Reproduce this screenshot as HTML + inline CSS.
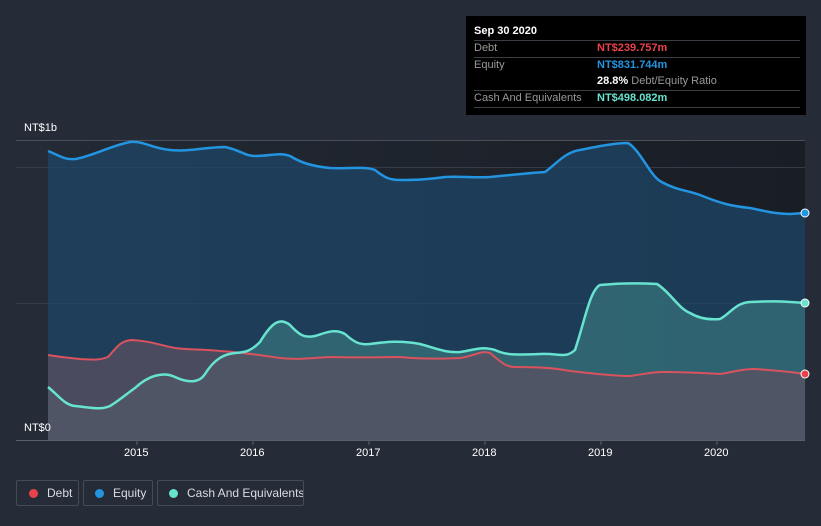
<!DOCTYPE html>
<html><head><style>
html,body{margin:0;width:821px;height:526px;overflow:hidden}
body{background:#262c37;font-family:"Liberation Sans",sans-serif;position:relative}
.t{position:absolute;color:#fff;font-size:11px}
.tip{position:absolute;left:466px;top:16px;width:340px;height:99px;background:#000}
.tip div{position:absolute;font-size:11px;white-space:nowrap}
.ln{position:absolute;left:8px;width:326px;height:1px;background:#3b3f45}
.leg{position:absolute;top:480px;height:26px;border:1px solid #464c56;border-radius:2px;color:#d8dce2;font-size:12px;line-height:24px;box-sizing:border-box;white-space:nowrap;overflow:hidden}
.leg i{display:inline-block;width:9px;height:9px;border-radius:50%;margin:0 9px 0 11px;vertical-align:-1px}
</style></head><body>
<svg width="821" height="526" style="position:absolute;left:0;top:0">
<defs><linearGradient id="bg" x1="0" x2="1"><stop offset="0" stop-color="#232a35"/><stop offset="1" stop-color="#191d24"/></linearGradient></defs>
<rect x="48" y="140" width="757" height="300" fill="url(#bg)"/>
<line x1="16" y1="140.5" x2="805" y2="140.5" stroke="#4a505a"/>
<line x1="16" y1="167.5" x2="805" y2="167.5" stroke="#353c47"/>
<line x1="16" y1="303.5" x2="805" y2="303.5" stroke="#353c47"/>
<path d="M48,151 C60,156 65,160 75,159 C90,157 110,146 130,142 C145,141 150,148 170,150 C190,152 205,147 225,147 C240,150 245,156 255,156 C270,156 280,152 290,156 C300,162 310,166 330,168 C350,169 365,166 375,170 C385,178 390,180 400,180 C420,180 430,179 445,177 C460,176 475,178 490,177 C510,175 530,173 545,172 C555,165 565,152 580,150 C600,146 615,143 628,143 C640,150 650,175 660,181 C675,190 690,191 700,195 C720,203 730,206 750,208 C765,211 775,214 790,214 L805,213 L805,440 L48,440Z" fill="#1d4567" fill-opacity=".75"/>
<path d="M48,387 C60,397 65,405 75,406 C95,408 100,410 110,406 C120,400 125,395 135,388 C150,374 165,372 175,377 C190,384 200,382 205,374 C215,358 225,354 235,353 C245,352 250,352 260,342 C272,322 280,317 290,325 C300,336 305,338 315,336 C325,333 335,328 345,334 C355,343 360,345 370,344 C385,342 400,340 420,344 C435,348 445,353 460,352 C475,350 480,346 495,350 C505,355 515,355 540,354 C560,353 565,359 575,350 C585,320 590,290 600,285 C620,283 640,283 657,284 C670,292 678,308 690,313 C700,319 710,320 720,319 C730,314 735,303 750,302 C770,301 780,301 805,303 L805,440 L48,440Z" fill="#3a7a80" fill-opacity=".65"/>
<path d="M48,355 C60,357 70,358 80,359 C95,360 100,360 108,357 C118,346 120,341 132,340 C150,341 160,345 175,348 C190,350 200,349 220,351 C240,352 260,355 280,358 C300,360 310,358 330,357 C360,358 380,357 400,357 C420,359 440,359 460,358 C475,356 480,350 490,353 C500,361 505,367 515,367 C540,367 555,368 570,371 C590,373 610,376 630,376 C645,374 650,372 665,372 C690,372 700,373 720,374 C735,372 740,369 755,369 C770,370 785,371 805,374 L805,440 L48,440Z" fill="#5a5060" fill-opacity=".75"/>
<path d="M48,355 C60,357 70,358 80,359 C95,360 100,360 108,357 C118,346 120,341 132,340 C150,341 160,345 175,348 C190,350 200,349 220,351 C240,352 260,355 280,358 C300,360 310,358 330,357 C360,358 380,357 400,357 C420,359 440,359 460,358 C475,356 480,350 490,353 C500,361 505,367 515,367 C540,367 555,368 570,371 C590,373 610,376 630,376 C645,374 650,372 665,372 C690,372 700,373 720,374 C735,372 740,369 755,369 C770,370 785,371 805,374" fill="none" stroke="#d9535f" stroke-width="2"/>
<path d="M48,387 C60,397 65,405 75,406 C95,408 100,410 110,406 C120,400 125,395 135,388 C150,374 165,372 175,377 C190,384 200,382 205,374 C215,358 225,354 235,353 C245,352 250,352 260,342 C272,322 280,317 290,325 C300,336 305,338 315,336 C325,333 335,328 345,334 C355,343 360,345 370,344 C385,342 400,340 420,344 C435,348 445,353 460,352 C475,350 480,346 495,350 C505,355 515,355 540,354 C560,353 565,359 575,350 C585,320 590,290 600,285 C620,283 640,283 657,284 C670,292 678,308 690,313 C700,319 710,320 720,319 C730,314 735,303 750,302 C770,301 780,301 805,303" fill="none" stroke="#67e3cf" stroke-width="2.5"/>
<path d="M48,151 C60,156 65,160 75,159 C90,157 110,146 130,142 C145,141 150,148 170,150 C190,152 205,147 225,147 C240,150 245,156 255,156 C270,156 280,152 290,156 C300,162 310,166 330,168 C350,169 365,166 375,170 C385,178 390,180 400,180 C420,180 430,179 445,177 C460,176 475,178 490,177 C510,175 530,173 545,172 C555,165 565,152 580,150 C600,146 615,143 628,143 C640,150 650,175 660,181 C675,190 690,191 700,195 C720,203 730,206 750,208 C765,211 775,214 790,214 L805,213" fill="none" stroke="#2394e0" stroke-width="2.5"/>
<circle cx="805" cy="213" r="4" fill="#2394e0" stroke="#fff"/>
<circle cx="805" cy="303" r="4" fill="#67e3cf" stroke="#fff"/>
<circle cx="805" cy="374" r="4" fill="#e9424a" stroke="#fff"/>
<line x1="16" y1="440.5" x2="805" y2="440.5" stroke="#5a606a"/>
<g stroke="#5a606a"><line x1="137" y1="440" x2="137" y2="445"/><line x1="253" y1="440" x2="253" y2="445"/><line x1="369" y1="440" x2="369" y2="445"/><line x1="485" y1="440" x2="485" y2="445"/><line x1="601" y1="440" x2="601" y2="445"/><line x1="717" y1="440" x2="717" y2="445"/></g>
</svg>
<div class="t" style="left:24px;top:122px">NT$1b</div>
<div class="t" style="left:24px;top:422px">NT$0</div>
<div class="t" style="left:124px;top:447px">2015</div>
<div class="t" style="left:240px;top:447px">2016</div>
<div class="t" style="left:356px;top:447px">2017</div>
<div class="t" style="left:472px;top:447px">2018</div>
<div class="t" style="left:588px;top:447px">2019</div>
<div class="t" style="left:704px;top:447px">2020</div>
<div class="tip">
<div style="left:8px;top:9px;color:#fff;font-weight:bold">Sep 30 2020</div>
<div class="ln" style="top:24px"></div>
<div style="left:8px;top:26px;color:#999">Debt</div><div style="left:131px;top:26px;color:#e9424a;font-weight:bold">NT$239.757m</div>
<div class="ln" style="top:41px"></div>
<div style="left:8px;top:43px;color:#999">Equity</div><div style="left:131px;top:43px;color:#2394e0;font-weight:bold">NT$831.744m</div>
<div style="left:131px;top:59px;color:#999"><b style="color:#fff">28.8%</b> Debt/Equity Ratio</div>
<div class="ln" style="top:74px"></div>
<div style="left:8px;top:76px;color:#999">Cash And Equivalents</div><div style="left:131px;top:76px;color:#67e3cf;font-weight:bold">NT$498.082m</div>
<div class="ln" style="top:91px"></div>
</div>
<div class="leg" style="left:16px;width:63px"><i style="background:#e9424a;margin-left:12px"></i>Debt</div>
<div class="leg" style="left:83px;width:70px"><i style="background:#2394e0"></i>Equity</div>
<div class="leg" style="left:157px;width:147px"><i style="background:#67e3cf"></i>Cash And Equivalents</div>
</body></html>
